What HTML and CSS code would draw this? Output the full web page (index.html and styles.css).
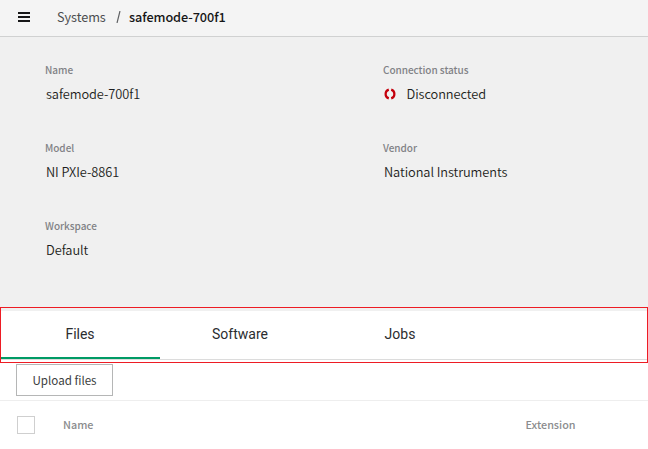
FILE: index.html
```html
<!DOCTYPE html>
<html lang="en">
<head>
<meta charset="utf-8">
<title>Systems / safemode-700f1</title>
<link rel="stylesheet" href="styles.css">
</head>
<body>
<header class="topbar">
  <svg class="menu" viewBox="0 0 12 10" width="12" height="10"><path d="M0 0h12v2H0zM0 4h12v2H0zM0 8h12v2H0z"/></svg>
  <nav class="crumbs"><span class="crumb">Systems</span><svg class="slash" width="5" height="12" viewBox="0 0 5 12"><path d="M4 0L1 12"/></svg><span class="current">safemode-700f1</span></nav>
</header>
<section class="details">
  <div class="field"><div class="label">Name</div><div class="value">safemode-700f1</div></div>
  <div class="field"><div class="label">Connection status</div><div class="value"><svg class="status" width="12" height="12" viewBox="0 0 12 12"><path d="M4.8 1.6Q1.6 2.6 1.6 6T4.8 10.4M7.2 1.6Q10.4 2.6 10.4 6T7.2 10.4"/></svg>Disconnected</div></div>
  <div class="field"><div class="label">Model</div><div class="value">NI PXIe-8861</div></div>
  <div class="field"><div class="label">Vendor</div><div class="value">National Instruments</div></div>
  <div class="field"><div class="label">Workspace</div><div class="value">Default</div></div>
</section>
<div class="tabs-frame">
  <nav class="tabs">
    <span class="tab active">Files</span>
    <span class="tab">Software</span>
    <span class="tab">Jobs</span>
  </nav>
</div>
<div class="toolbar"><button class="upload">Upload files</button></div>
<div class="table-head"><span class="checkbox"></span><span class="col-name">Name</span><span class="col-ext">Extension</span></div>
</body>
</html>
```
FILE: styles.css
```css
* { box-sizing: border-box; }
body {
  margin: 0;
  height: 449px;
  overflow: hidden;
  background: #fff;
  color: #2b2d2f;
  font-family: "Noto Sans CJK SC", "Open Sans", sans-serif;
  font-size: 12.7px;
}
.topbar {
  display: flex;
  align-items: center;
  height: 37px;
  padding: 0 0 2px 18px;
  background: #f4f4f4;
  border-bottom: 1px solid #d0d1d1;
}
.menu { fill: #161617; }
.crumbs { display: flex; align-items: center; margin-left: 27px; line-height: 18px; padding-bottom: 1px; }
.crumb { width: 59px; color: #4b4d4f; letter-spacing: -0.06px; }
.slash { margin-top: 1px; fill: none; stroke: #606264; stroke-width: 1.2; }
.current { margin-left: 8px; font-weight: 500; color: #161617; letter-spacing: -0.08px; }
.details {
  display: grid;
  grid-template-columns: 338px 1fr;
  grid-auto-rows: 78px;
  height: 270px;
  padding: 25px 0 0 45px;
  background: #f0f0f0;
}
.label {
  height: 16px;
  line-height: 16px;
  font-size: 10px;
  font-weight: 500;
  color: #818286;
  letter-spacing: -0.04px;
}
.value {
  display: flex;
  align-items: center;
  height: 20px;
  margin-top: 6px;
  padding-left: 1px;
  line-height: 20px;
  font-size: 12.8px;
  font-weight: 350;
  letter-spacing: -0.07px;
  color: #1d1e20;
}
.status { margin-right: 10.5px; fill: none; stroke: #c4000c; stroke-width: 2.2; }
.tabs-frame {
  height: 56px;
  padding-top: 3px;
  border: 1px solid #ed1c24;
  background: linear-gradient(#f0f0f0 3px, #fff 3px);
}
.tabs { display: flex; height: 49px; border-bottom: 1px solid #dcdcdc; }
.tab {
  width: 160px;
  height: 48px;
  line-height: 46px;
  text-align: center;
  font-family: Roboto, sans-serif;
  font-size: 14px;
}
.tab.active { width: 159px; padding-right: 1px; border-bottom: 2px solid #009b65; }
.toolbar { height: 38px; padding: 1px 16px 0; border-bottom: 1px solid #eee; }
.upload {
  width: 97px;
  height: 32px;
  padding: 0;
  border: 1px solid #b5b6b6;
  background: #fff;
  color: #3c3e40;
  font: 11.6px/28px "Noto Sans CJK SC", "Open Sans", sans-serif;
}
.table-head {
  display: flex;
  align-items: center;
  height: 48px;
  padding-left: 17px;
  font-size: 10.8px;
  font-weight: 500;
  line-height: 16px;
  color: #8b8c8e;
}
.checkbox { width: 18px; height: 18px; border: 1px solid #cfcfcf; }
.col-name { width: 462.5px; margin-left: 28px; }
.col-name, .col-ext { padding-bottom: 2px; }
```
